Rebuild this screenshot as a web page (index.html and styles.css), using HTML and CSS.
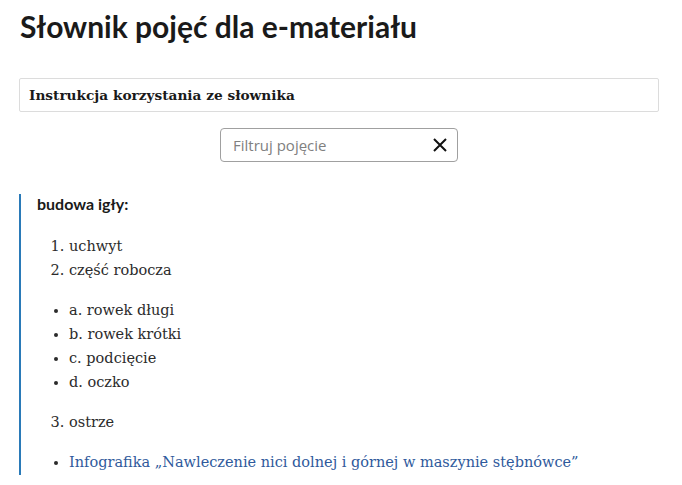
FILE: index.html
```html
<!DOCTYPE html>
<html lang="pl">
<head>
<meta charset="utf-8">
<link rel="stylesheet" href="styles.css">
</head>
<body>
<main class="page">
  <h1 class="title">Słownik pojęć dla e-materiału</h1>
  <div class="instr">Instrukcja korzystania ze słownika</div>
  <div class="filter-row">
    <div class="filter">
      <span class="placeholder">Filtruj pojęcie</span>
      <svg class="clear" width="14" height="14" viewBox="0 0 14 14"><path d="M1 1 L13 13 M13 1 L1 13" stroke="#111" stroke-width="2" fill="none"/></svg>
    </div>
  </div>
  <section class="entry">
    <h2 class="term">budowa igły:</h2>
    <ol class="olist">
      <li>uchwyt</li>
      <li>część robocza</li>
    </ol>
    <ul class="ulist">
      <li>a. rowek długi</li>
      <li>b. rowek krótki</li>
      <li>c. podcięcie</li>
      <li>d. oczko</li>
    </ul>
    <ol class="olist" start="3">
      <li>ostrze</li>
    </ol>
    <ul class="ulist">
      <li><a class="link" href="#">Infografika „Nawleczenie nici dolnej i górnej w maszynie stębnówce”</a></li>
    </ul>
  </section>
</main>
</body>
</html>
```
FILE: styles.css
```css
html, body { margin: 0; padding: 0; background: #fff; }
.page { padding: 0 23px 0 19px; }
.title {
  font-family: Lato, "Liberation Sans", sans-serif;
  font-weight: 700;
  font-size: 30px;
  line-height: 36px;
  color: #1a1a1a;
  margin: 0;
  padding: 8px 0 0 1px;
}
.instr {
  margin-top: 34px;
  height: 32px;
  border: 1px solid #dcdcdc;
  border-radius: 2px;
  box-sizing: content-box;
  display: flex;
  align-items: center;
  padding-left: 9px;
  font-family: "DejaVu Serif", serif;
  font-weight: 700;
  font-size: 13.7px;
  color: #1a1a1a;
}
.filter-row { display: flex; justify-content: center; margin-top: 16px; }
.filter {
  height: 32px;
  border: 1px solid #a0a0a0;
  border-radius: 4px;
  display: flex;
  align-items: center;
  justify-content: space-between;
  padding: 0 10px 0 12px;
  box-sizing: content-box;
  width: 214px;
}
.placeholder {
  font-family: "Open Sans", sans-serif;
  font-size: 15px;
  color: #808080;
}
.clear { display: block; }
.entry {
  margin-top: 32px;
  border-left: 2px solid #2a7ab8;
  padding: 0 0 1px 16px;
}
.term {
  font-family: Lato, sans-serif;
  font-weight: 700;
  font-size: 16px;
  line-height: 20px;
  color: #1a1a1a;
  margin: 0 0 20px 0;
}
.olist, .ulist {
  margin: 0 0 16px 0;
  padding-left: 32px;
  font-family: "DejaVu Serif", serif;
  font-size: 14.5px;
  line-height: 24px;
  color: #2b2b2b;
}
.ulist:last-child { margin-bottom: 0; }
.link { color: #2f5a9c; text-decoration: none; }
```
